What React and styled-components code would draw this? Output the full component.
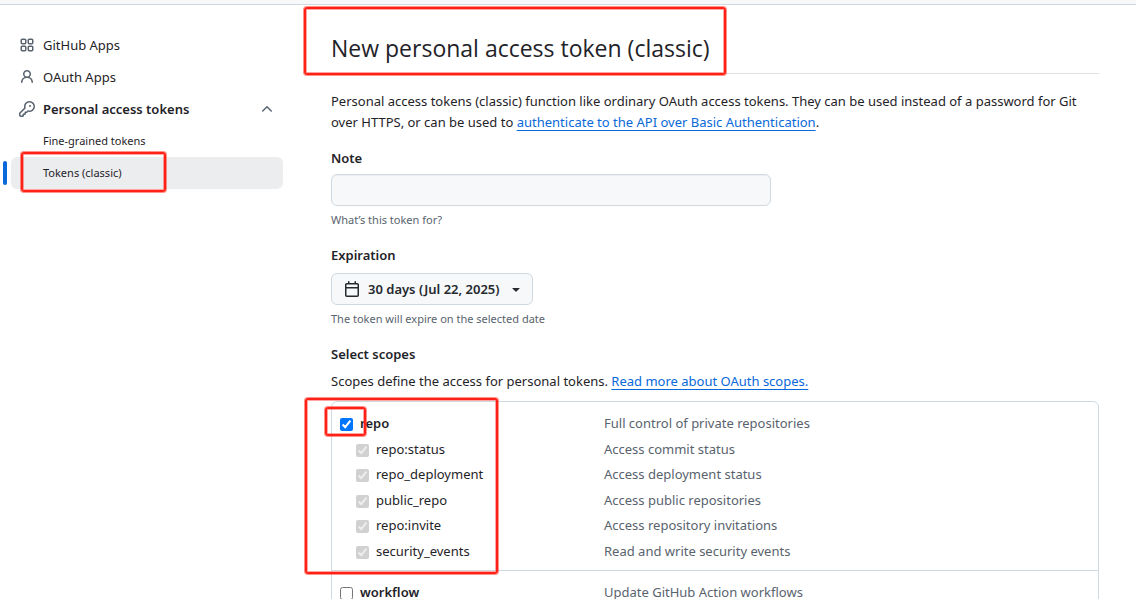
import React, { useState } from "react";
import styled, { createGlobalStyle, css } from "styled-components";

const GlobalStyle = createGlobalStyle`
  *, *::before, *::after { box-sizing: border-box; }
  body {
    margin: 0;
    background: #ffffff;
    color: #1f2328;
    font-family: "Segoe UI", "Noto Sans", sans-serif;
    font-size: 13px;
    line-height: 21px;
  }
  button, input { font: inherit; color: inherit; }
`;

const paths = {
  apps: "M1.5 3.25c0-.966.784-1.75 1.75-1.75h2.5c.966 0 1.75.784 1.75 1.75v2.5A1.75 1.75 0 0 1 5.75 7.5h-2.5A1.75 1.75 0 0 1 1.5 5.75Zm7 0c0-.966.784-1.75 1.75-1.75h2.5c.966 0 1.75.784 1.75 1.75v2.5a1.75 1.75 0 0 1-1.75 1.75h-2.5A1.75 1.75 0 0 1 8.5 5.75Zm-7 7c0-.966.784-1.75 1.75-1.75h2.5c.966 0 1.75.784 1.75 1.75v2.5a1.75 1.75 0 0 1-1.75 1.75h-2.5a1.75 1.75 0 0 1-1.75-1.75Zm7 0c0-.966.784-1.75 1.75-1.75h2.5c.966 0 1.75.784 1.75 1.75v2.5a1.75 1.75 0 0 1-1.75 1.75h-2.5a1.75 1.75 0 0 1-1.75-1.75ZM3.25 3a.25.25 0 0 0-.25.25v2.5c0 .138.112.25.25.25h2.5A.25.25 0 0 0 6 5.75v-2.5A.25.25 0 0 0 5.75 3Zm7 0a.25.25 0 0 0-.25.25v2.5c0 .138.112.25.25.25h2.5a.25.25 0 0 0 .25-.25v-2.5a.25.25 0 0 0-.25-.25Zm-7 7a.25.25 0 0 0-.25.25v2.5c0 .138.112.25.25.25h2.5a.25.25 0 0 0 .25-.25v-2.5a.25.25 0 0 0-.25-.25Zm7 0a.25.25 0 0 0-.25.25v2.5c0 .138.112.25.25.25h2.5a.25.25 0 0 0 .25-.25v-2.5a.25.25 0 0 0-.25-.25Z",
  person: "M10.561 8.073a6.005 6.005 0 0 1 3.432 5.142.75.75 0 1 1-1.498.07 4.5 4.5 0 0 0-8.99 0 .75.75 0 0 1-1.498-.07 6.004 6.004 0 0 1 3.431-5.142 3.999 3.999 0 1 1 5.123 0ZM10.5 5a2.5 2.5 0 1 0-5 0 2.5 2.5 0 0 0 5 0Z",
  key: "M10.5 0a5.499 5.499 0 1 1-1.288 10.848l-.932.932a.749.749 0 0 1-.53.22H7v.75a.749.749 0 0 1-.22.53l-.5.5a.749.749 0 0 1-.53.22H5v.75a.749.749 0 0 1-.22.53l-.5.5a.749.749 0 0 1-.53.22h-2A1.75 1.75 0 0 1 0 14.25v-2c0-.199.079-.389.22-.53l4.932-4.932A5.5 5.5 0 0 1 10.5 0Zm-4 5.5c-.001.431.069.86.205 1.269a.75.75 0 0 1-.181.768L1.5 12.56v1.69c0 .138.112.25.25.25h1.69l.06-.06v-1.19a.75.75 0 0 1 .75-.75h1.19l.06-.06v-1.19a.75.75 0 0 1 .75-.75h1.19l1.023-1.025a.75.75 0 0 1 .768-.18A4 4 0 1 0 6.5 5.5ZM11 6a1 1 0 1 1 0-2 1 1 0 0 1 0 2Z",
  chevronUp: "M3.22 10.53a.749.749 0 0 1 0-1.06l4.25-4.25a.749.749 0 0 1 1.06 0l4.25 4.25a.749.749 0 1 1-1.06 1.06L8 6.811 4.28 10.53a.749.749 0 0 1-1.06 0Z",
  calendar: "M4.75 0a.75.75 0 0 1 .75.75V2h5V.75a.75.75 0 0 1 1.5 0V2h1.25c.966 0 1.75.784 1.75 1.75v10.5A1.75 1.75 0 0 1 13.25 16H2.75A1.75 1.75 0 0 1 1 14.25V3.75C1 2.784 1.784 2 2.75 2H4V.75A.75.75 0 0 1 4.75 0ZM2.5 7.5v6.75c0 .138.112.25.25.25h10.5a.25.25 0 0 0 .25-.25V7.5Zm10.75-4H2.75a.25.25 0 0 0-.25.25V6h11V3.75a.25.25 0 0 0-.25-.25Z",
  triangleDown: "m4.427 7.427 3.396 3.396a.25.25 0 0 0 .354 0l3.396-3.396A.25.25 0 0 0 11.396 7H4.604a.25.25 0 0 0-.177.427Z",
};

const Svg = styled.svg`
  display: block;
  flex: none;
  fill: ${(p) => (p.$muted ? "#59636e" : "currentColor")};
`;

const Icon = ({ name, muted }) => (
  <Svg $muted={muted} width="16" height="16" viewBox="0 0 16 16" aria-hidden="true">
    <path d={paths[name]} />
  </Svg>
);

const TopBar = styled.header`
  height: 5px;
  background: #f6f8fa;
  border-bottom: 1px solid #d1d9e0;
`;

const Page = styled.div`
  display: flex;
  align-items: flex-start;
  height: calc(100vh - 5px);
  overflow: hidden;
`;

const Sidebar = styled.nav`
  flex: none;
  width: 283px;
  padding: 24px 0 0 11px;
`;

const NavList = styled.ul`
  list-style: none;
  margin: 0;
  padding: 0;
`;

const itemStyle = css`
  position: relative;
  display: flex;
  align-items: center;
  gap: 8px;
  width: 100%;
  height: 32px;
  padding: 0 8px;
  border: 0;
  border-radius: 6px;
  background: transparent;
  color: #1f2328;
  text-align: left;
  text-decoration: none;
`;

const NavLink = styled.a`
  ${itemStyle}
`;

const NavToggle = styled.button`
  ${itemStyle}
  font-weight: 600;
`;

const ToggleText = styled.span`
  flex: 1;
`;

const SubLink = styled.a`
  ${itemStyle}
  padding: 0 8px 2px 32px;
  font-size: 11px;
  ${(p) =>
    p.$current &&
    css`
      background: #ecedef;
      &::before {
        content: "";
        position: absolute;
        left: -8px;
        top: 4px;
        width: 4px;
        height: 24px;
        border-radius: 6px;
        background: #0969da;
      }
    `}
`;

const Main = styled.main`
  flex: 1;
  min-width: 0;
  padding: 24px 37px 0 48px;
`;

const Mark = styled.span`
  position: absolute;
  z-index: 1;
  top: ${(p) => p.$top}px;
  left: ${(p) => p.$left}px;
  width: ${(p) => p.$width}px;
  height: ${(p) => p.$height}px;
  border: 2px solid #ff2116;
  border-radius: 3px;
  box-shadow: 0 0 0 1px #ff211680, inset 0 0 0 1px #ff211666;
  pointer-events: none;
`;

const TitleBar = styled.div`
  position: relative;
  padding: 1px 0 7px;
  border-bottom: 1px solid #dfe1e4;
`;

const Title = styled.h2`
  margin: 0;
  font-family: "Segoe UI", "Open Sans", sans-serif;
  font-size: 23px;
  font-weight: 400;
  line-height: 36px;
`;

const Text = styled.p`
  margin: 0;
`;

const Intro = styled(Text)`
  margin: 17px 0 15px;
`;

const Link = styled.a`
  color: #0969da;
  text-decoration: underline;
  text-underline-offset: 3px;
`;

const Form = styled.form`
  display: flex;
  flex-direction: column;
  gap: 16px;
`;

const Field = styled.div`
  display: flex;
  flex-direction: column;
  align-items: flex-start;
`;

const Label = styled.label`
  font-weight: 600;
`;

const NoteInput = styled.input`
  width: 440px;
  max-width: 100%;
  height: 32px;
  margin-top: 5px;
  padding: 5px 12px;
  background: #f6f8fa;
  border: 1px solid #d1d9e0;
  border-radius: 6px;
  box-shadow: inset 0 1px 0 #1f23280a;
`;

const Hint = styled.p`
  margin: 5px 0 0;
  color: #59636e;
  font-size: 11px;
  line-height: 18px;
`;

const DateButton = styled.button`
  display: flex;
  align-items: center;
  gap: 8px;
  height: 32px;
  margin-top: 7px;
  padding: 0 8px 0 12px;
  background: #f6f8fa;
  border: 1px solid #d1d9e0;
  border-radius: 6px;
  color: #25292e;
  font-weight: 600;
`;

const ScopesTitle = styled.h3`
  margin: 0 0 6px;
  font-size: 13px;
  font-weight: 600;
`;

const ScopeBox = styled.div`
  position: relative;
  align-self: stretch;
  margin-top: 9px;
  border: 1px solid #d1d9e0;
  border-radius: 6px;
`;

const ScopeList = styled.ul`
  list-style: none;
  margin: 0;
  padding: 9px 8px 6px;
  & + & {
    border-top: 1px solid #d1d9e0;
  }
`;

const ScopeRow = styled.li`
  display: flex;
  align-items: center;
  height: 25px;
  &:nth-child(even) {
    height: 26px;
  }
`;

const ScopeLabel = styled.label`
  display: flex;
  align-items: center;
  gap: 7px;
  flex: none;
  width: 264px;
  padding-left: ${(p) => (p.$child ? 16 : 0)}px;
  font-weight: ${(p) => (p.$child ? 400 : 600)};
`;

const Check = styled.input`
  width: 13px;
  height: 13px;
  margin: 2px 0 0;
`;

const Description = styled.span`
  color: #59636e;
`;

const repoScopes = [
  ["repo:status", "Access commit status"],
  ["repo_deployment", "Access deployment status"],
  ["public_repo", "Access public repositories"],
  ["repo:invite", "Access repository invitations"],
  ["security_events", "Read and write security events"],
];

const Scope = ({ name, description, child, ...input }) => (
  <ScopeRow>
    <ScopeLabel $child={child}>
      <Check type="checkbox" {...input} />
      {name}
    </ScopeLabel>
    <Description>{description}</Description>
  </ScopeRow>
);

export default function App() {
  const [repo, setRepo] = useState(true);
  const [workflow, setWorkflow] = useState(false);

  return (
    <>
      <GlobalStyle />
      <TopBar />
      <Page>
        <Sidebar>
          <NavList>
            <li><NavLink href="#apps"><Icon name="apps" muted />GitHub Apps</NavLink></li>
            <li><NavLink href="#oauth"><Icon name="person" muted />OAuth Apps</NavLink></li>
            <li>
              <NavToggle type="button" aria-expanded="true">
                <Icon name="key" muted />
                <ToggleText>Personal access tokens</ToggleText>
                <Icon name="chevronUp" muted />
              </NavToggle>
              <NavList>
                <li><SubLink href="#fine-grained">Fine-grained tokens</SubLink></li>
                <li>
                  <SubLink href="#classic" $current aria-current="page">
                    Tokens (classic)
                    <Mark $top={-5} $left={10} $width={145} $height={40} />
                  </SubLink>
                </li>
              </NavList>
            </li>
          </NavList>
        </Sidebar>
        <Main>
          <TitleBar>
            <Title>New personal access token (classic)</Title>
            <Mark $top={-22} $left={-27} $width={422} $height={68} />
          </TitleBar>
          <Intro>
            Personal access tokens (classic) function like ordinary OAuth access tokens. They can be
            used instead of a password for Git over HTTPS, or can be used to{" "}
            <Link href="#auth">authenticate to the API over Basic Authentication</Link>.
          </Intro>
          <Form>
            <Field>
              <Label htmlFor="note">Note</Label>
              <NoteInput id="note" type="text" />
              <Hint>What’s this token for?</Hint>
            </Field>
            <Field>
              <Label htmlFor="expiration">Expiration</Label>
              <DateButton id="expiration" type="button" aria-haspopup="true">
                <Icon name="calendar" />
                30 days (Jul 22, 2025)
                <Icon name="triangleDown" />
              </DateButton>
              <Hint>The token will expire on the selected date</Hint>
            </Field>
            <Field>
              <ScopesTitle>Select scopes</ScopesTitle>
              <Text>
                Scopes define the access for personal tokens.{" "}
                <Link href="#scopes">Read more about OAuth scopes.</Link>
              </Text>
              <ScopeBox>
                <Mark $top={-4} $left={-27} $width={193} $height={176} />
                <Mark $top={5} $left={-7} $width={41} $height={29} />
                <ScopeList>
                  <Scope
                    name="repo"
                    description="Full control of private repositories"
                    checked={repo}
                    onChange={(e) => setRepo(e.target.checked)}
                  />
                  {repoScopes.map(([name, description]) => (
                    <Scope key={name} name={name} description={description} child checked={repo} disabled readOnly />
                  ))}
                </ScopeList>
                <ScopeList>
                  <Scope
                    name="workflow"
                    description="Update GitHub Action workflows"
                    checked={workflow}
                    onChange={(e) => setWorkflow(e.target.checked)}
                  />
                </ScopeList>
              </ScopeBox>
            </Field>
          </Form>
        </Main>
      </Page>
    </>
  );
}
